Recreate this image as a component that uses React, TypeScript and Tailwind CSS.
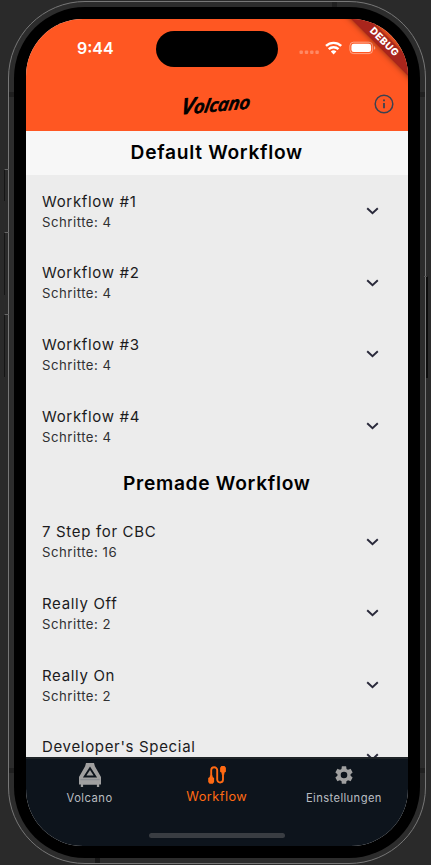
import React from "react";

const INTER = "font-['Inter','Liberation_Sans',sans-serif]";

function Chevron() {
  return (
    <svg className="mr-[29px] shrink-0" width="13" height="8" viewBox="0 0 13 8" fill="none" stroke="#29293a" strokeWidth="1.9">
      <path d="M1.2 1.2 6.5 6.3l5.3-5.1" />
    </svg>
  );
}

function Row({ title, steps }: { title: string; steps: number }) {
  return (
    <div className="flex h-[71.7px] shrink-0 items-center justify-between pl-4">
      <div className="flex flex-col pt-[0.4px]">
        <span className="text-[15px] leading-[21px] tracking-[0.67px] text-[#1b1b1d]">{title}</span>
        <span className="text-[13.2px] leading-5 tracking-[0.5px] text-[#303032]">Schritte: {steps}</span>
      </div>
      <Chevron />
    </div>
  );
}

function Heading({ children, light }: { children: string; light?: boolean }) {
  return (
    <h2
      className={`flex h-[44px] shrink-0 items-center justify-center text-[19.2px] font-semibold tracking-[0.7px] text-black ${light ? "bg-[#f7f7f7] pb-px" : ""}`}
    >
      {children}
    </h2>
  );
}

function StatusBar() {
  return (
    <div className="flex h-[58px] items-center text-white">
      <span className="ml-[51px] w-[79px] text-[16px] font-semibold">9:44</span>
      <div className="mt-px h-9 w-[122px] shrink-0 rounded-full bg-black" />
      <svg className="ml-[20px] shrink-0" width="85" height="20" viewBox="0 0 85 20">
        <g fill="#fff" fillOpacity=".3">
          <rect x="1.5" y="12.5" width="3.4" height="3.4" rx="1" />
          <rect x="6.8" y="12.5" width="3.4" height="3.4" rx="1" />
          <rect x="12.1" y="12.5" width="3.4" height="3.4" rx="1" />
          <rect x="17.4" y="12.5" width="3.4" height="3.4" rx="1" />
        </g>
        <g fill="none" stroke="#fff" strokeWidth="2.4">
          <path d="M28 7.9a11 11 0 0 1 15.2 0" />
          <path d="M30.7 11.1a7.2 7.2 0 0 1 9.8 0" />
        </g>
        <path d="m35.6 16.6-2.8-3a4 4 0 0 1 5.6 0z" fill="#fff" />
        <rect x="51.9" y="4.2" width="22.7" height="11.4" rx="3.6" fill="none" stroke="#fff" strokeOpacity=".45" />
        <rect x="53.4" y="5.7" width="19.7" height="8.4" rx="2.3" fill="#fff" />
        <path d="M76 8c1.8.5 1.8 3.3 0 3.8z" fill="#fff" fillOpacity=".5" />
      </svg>
    </div>
  );
}

function TopBar() {
  return (
    <div className="relative flex h-[54px] items-center justify-center">
      <svg width="90" height="48" viewBox="0 0 90 48" className="-mt-[2px]">
        <text
          transform="translate(8.5 35.5) rotate(-5) skewX(-14)"
          textLength="69"
          lengthAdjust="spacingAndGlyphs"
          className="fill-black stroke-black font-['Open_Sans',sans-serif] text-[18px] font-semibold italic"
          strokeWidth=".8"
          strokeLinejoin="round"
        >
          <tspan className="text-[22px]">V</tspan>olcano
        </text>
      </svg>
      <svg className="absolute right-[13.5px] top-[17px]" width="20" height="20" viewBox="0 0 20 20" fill="none" stroke="#3c4250" strokeWidth="1.5">
        <circle cx="10" cy="10" r="8.8" />
        <path d="M10 9v5.2M10 5.5v1.8" strokeWidth="1.8" />
      </svg>
    </div>
  );
}

function VolcanoIcon() {
  return (
    <svg width="24" height="24" viewBox="0 0 24 24">
      <path
        fill="#a0a0a0"
        fillRule="evenodd"
        d="M8 0h8l.9 3.3 6.1 10.7v7.6h-1.8V24h-2.3v-2.2H5.1V24H2.8v-2.4H1V14L7.1 3.3zM12 3.6 4.9 14.6h14.2z"
      />
      <path fill="#a0a0a0" d="m12 6.9 3.6 5.7H8.4z" />
      <path d="M2.4 16.7h19.2" stroke="#7b8288" strokeWidth=".7" />
    </svg>
  );
}

function RouteIcon() {
  return (
    <svg width="20" height="20" viewBox="0 0 20 20">
      <path d="M4.2 14V5.2a3 3 0 0 1 6 0v9.4a2.9 2.9 0 0 0 5.8 0V5" fill="none" stroke="#ff6a13" strokeWidth="1.9" />
      <path d="M2.8 10.4h2.8V12l1.5 1v4L5.8 18.8H2.6L1.2 17v-4l1.6-1zM14.4 1h3.1l1.4 1.8v4l-1.5 1v1.6h-2.8V7.8l-1.5-1v-4z" fill="#ff6a13" />
    </svg>
  );
}

function GearIcon() {
  return (
    <svg width="22" height="22" viewBox="0 0 24 24" fill="#a0a0a0">
      <path d="M19.14 12.94c.04-.3.06-.61.06-.94 0-.32-.02-.64-.07-.94l2.03-1.58a.49.49 0 0 0 .12-.61l-1.92-3.32a.488.488 0 0 0-.59-.22l-2.39.96c-.5-.38-1.03-.7-1.62-.94l-.36-2.54a.484.484 0 0 0-.48-.41h-3.84c-.24 0-.43.17-.47.41l-.36 2.54c-.59.24-1.13.57-1.62.94l-2.39-.96c-.22-.08-.47 0-.59.22L2.74 8.87c-.12.21-.08.47.12.61l2.03 1.58c-.05.3-.09.63-.09.94s.02.64.07.94l-2.03 1.58a.49.49 0 0 0-.12.61l1.92 3.32c.12.22.37.29.59.22l2.39-.96c.5.38 1.03.7 1.62.94l.36 2.54c.05.24.24.41.48.41h3.84c.24 0 .44-.17.47-.41l.36-2.54c.59-.24 1.13-.56 1.62-.94l2.39.96c.22.08.47 0 .59-.22l1.92-3.32c.12-.22.07-.47-.12-.61zM12 15.6A3.6 3.6 0 1 1 12 8.4a3.6 3.6 0 0 1 0 7.2" />
    </svg>
  );
}

function BottomNav() {
  return (
    <nav className="relative h-[89px] shrink-0 border-t-2 border-[#1e2327] bg-[#0d141c]">
      <div className="grid grid-cols-3 text-[#b9bdc1]">
        <div className="flex flex-col items-center pt-[4px]">
          <VolcanoIcon />
          <span className="mt-[3px] text-[11.2px] leading-4 tracking-[0.5px]">Volcano</span>
        </div>
        <div className="flex flex-col items-center pt-[6px] text-[#ff6a13]">
          <RouteIcon />
          <span className="mt-[4px] text-[12.8px] leading-4 tracking-[0.45px]">Workflow</span>
        </div>
        <div className="flex flex-col items-center pt-[5px]">
          <GearIcon />
          <span className="mt-[4px] text-[11.2px] leading-4 tracking-[0.4px]">Einstellungen</span>
        </div>
      </div>
      <div className="absolute bottom-[8px] left-[123px] h-[5px] w-[136px] rounded-full bg-[#393d42]" />
    </nav>
  );
}

export default function App() {
  return (
    <div className={`relative h-[865px] w-[431px] overflow-hidden bg-[#2a2a2a] ${INTER}`}>
      <div className="absolute left-[4px] top-[169px] h-[32px] w-[5px] border-l border-t border-l-[#151515] border-t-[#666]" />
      <div className="absolute left-[4px] top-[232px] h-[63px] w-[5px] border-l border-t border-l-[#151515] border-t-[#666]" />
      <div className="absolute left-[4px] top-[314px] h-[63px] w-[5px] border-l border-t border-l-[#151515] border-t-[#666]" />
      <div className="absolute left-[424px] top-[276px] h-[102px] w-[4px] border-r-2 border-t border-r-[#0c0c0c] border-t-[#555]" />
      <div className="ml-[8px] h-[865px] w-[418px] pb-px pt-px">
        <div className="h-full rounded-[77px] border border-[#777] bg-[#2c2c2c] px-[5px] pb-[5px] pt-[5px]">
          <div className="h-full rounded-[71px] bg-black pb-[12px] pl-[12px] pr-[12.5px] pt-[12px]">
            <div className="relative flex h-full flex-col overflow-hidden rounded-[57px] bg-[#ececec]">
              <header className="h-[112px] shrink-0 bg-[#ff5722]">
                <StatusBar />
                <TopBar />
              </header>
              <main className="flex min-h-0 flex-1 flex-col overflow-hidden">
                <Heading light>Default Workflow</Heading>
                <Row title="Workflow #1" steps={4} />
                <Row title="Workflow #2" steps={4} />
                <Row title="Workflow #3" steps={4} />
                <Row title="Workflow #4" steps={4} />
                <Heading>Premade Workflow</Heading>
                <Row title="7 Step for CBC" steps={16} />
                <Row title="Really Off" steps={2} />
                <Row title="Really On" steps={2} />
                <Row title="Developer's Special" steps={4} />
              </main>
              <BottomNav />
              <div className="absolute right-[-36px] top-[17px] flex h-[12.5px] w-[120px] rotate-45 items-center justify-center bg-[#a9251c] text-[9.8px] font-extrabold tracking-[0.5px] text-white shadow-[0_0_6px_rgba(0,0,0,0.5)]">
                DEBUG
              </div>
            </div>
          </div>
        </div>
      </div>
      <div className="absolute left-[9px] top-[92px] h-[5px] w-[5px] bg-[#202020]" />
      <div className="absolute left-[9px] top-[768px] h-[5px] w-[5px] bg-[#202020]" />
      <div className="absolute left-[420px] top-[92px] h-[5px] w-[5px] bg-[#202020]" />
      <div className="absolute left-[420px] top-[768px] h-[5px] w-[5px] bg-[#202020]" />
      <div className="absolute left-[332px] top-[2px] h-[5px] w-[5px] bg-[#202020]" />
      <div className="absolute left-[95px] top-[858px] h-[5px] w-[5px] bg-[#181818]" />
    </div>
  );
}
